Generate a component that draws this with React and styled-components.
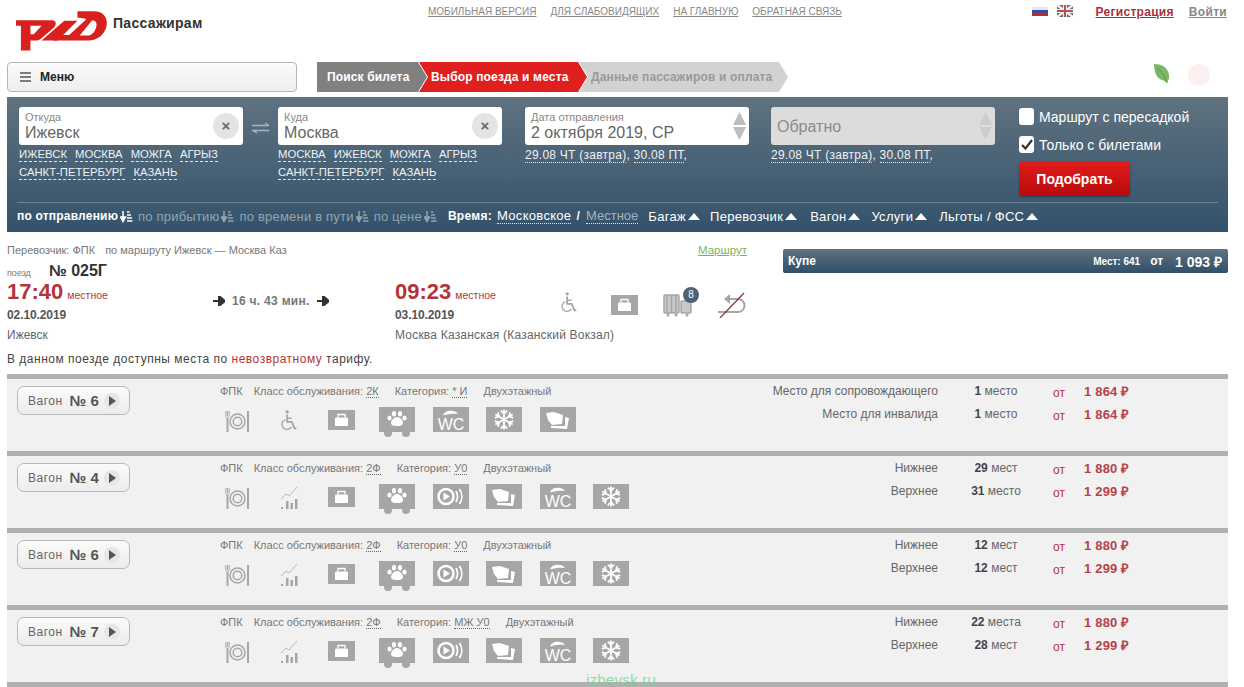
import React from 'react';
import styled, { createGlobalStyle } from 'styled-components';

const Global = createGlobalStyle`
  html, body { margin: 0; padding: 0; background: #fff; height: 687px; overflow: hidden; }
  body { font-family: "Liberation Sans", Arial, sans-serif; color: #444; }
  * { box-sizing: border-box; }
`;

const Page = styled.div`
  position: relative;
  width: 1244px;
  height: 687px;
  overflow: hidden;
`;

const Header = styled.header`
  display: grid;
  grid-template-columns: 428px 1fr auto;
  height: 62px;
  padding-right: 17px;
`;
const LogoBox = styled.div`
  display: flex;
  align-items: flex-start;
  padding: 10px 0 0 15px;
`;
const LogoText = styled.span`
  margin: 5px 0 0 6px;
  font-size: 14px;
  font-weight: bold;
  letter-spacing: 0.3px;
  color: #333;
`;
const TopNav = styled.nav`
  display: flex;
  gap: 14px;
  padding-top: 6px;
`;
const TopLink = styled.a`
  font-size: 10px;
  line-height: 12px;
  color: #888;
  text-decoration: underline;
  text-transform: uppercase;
`;
const UserBox = styled.div`
  display: flex;
  align-items: flex-start;
  padding-top: 5px;
`;
const Flag = styled.svg`
  width: 16px;
  height: 12px;
  margin-right: 9px;
`;
const UserLink = styled.a`
  margin-left: ${p => p.$ml}px;
  font-size: 12px;
  line-height: 14px;
  font-weight: bold;
  letter-spacing: 0.3px;
  text-decoration: underline;
  color: ${p => (p.$red ? '#a8323a' : '#888')};
`;

const ToolRow = styled.div`
  display: flex;
  height: 30px;
  padding-left: 7px;
  align-items: stretch;
`;
const MenuButton = styled.div`
  display: flex;
  align-items: center;
  width: 290px;
  padding-left: 12px;
  background: linear-gradient(#fbfbfb, #eee);
  border: 1px solid #b5b5b5;
  border-radius: 4px;
  font-size: 12px;
  font-weight: bold;
  color: #222;
`;
const Burger = styled.svg`
  width: 11px;
  height: 10px;
  margin-right: 9px;
`;
const Steps = styled.div`
  display: flex;
  margin-left: 20px;
`;
const Step = styled.div`
  display: flex;
  align-items: center;
  width: ${p => p.$w}px;
  margin-left: ${p => (p.$first ? 0 : -8)}px;
  padding-left: ${p => (p.$first ? 10 : 12)}px;
  font-size: 12px;
  font-weight: bold;
  letter-spacing: 0.15px;
  background: ${p => p.$bg};
  color: ${p => p.$color};
  clip-path: ${p => p.$first
    ? 'polygon(0 0, calc(100% - 9px) 0, 100% 50%, calc(100% - 9px) 100%, 0 100%)'
    : 'polygon(0 0, calc(100% - 9px) 0, 100% 50%, calc(100% - 9px) 100%, 0 100%, 9px 50%)'};
`;
const Eco = styled.div`
  display: flex;
  align-items: flex-start;
  margin-left: 365px;
  padding-top: 1px;
  gap: 17px;
`;
const Faint = styled.div`
  width: 22px;
  height: 22px;
  margin-top: 1px;
  border-radius: 50%;
  background: #fdf0f0;
`;

const Panel = styled.section`
  margin: 5px 16px 0 7px;
  height: 135px;
  padding: 10px 10px 0 12px;
  background: linear-gradient(#5f7280, #33526b);
  color: #fff;
`;
const Fields = styled.div`
  display: flex;
  height: 95px;
`;
const FieldCol = styled.div`
  width: ${p => p.$w || 224}px;
  margin-left: ${p => p.$ml || 0}px;
`;
const Input = styled.div`
  position: relative;
  height: 38px;
  padding: 4px 6px;
  border-radius: 3px;
  background: ${p => (p.$off ? '#dcdcdc' : '#fff')};
`;
const InputLabel = styled.div`
  font-size: 11px;
  line-height: 13px;
  color: #888;
`;
const InputValue = styled.div`
  font-size: 16px;
  line-height: 18px;
  color: #666;
`;
const OffValue = styled(InputValue)`
  padding-top: 7px;
  color: #8b8b8b;
`;
const Clear = styled.div`
  position: absolute;
  right: 4px;
  top: 6px;
  width: 26px;
  height: 26px;
  border-radius: 50%;
  background: #e4e4e4;
  color: #666;
  font-size: 15px;
  font-weight: bold;
  line-height: 26px;
  text-align: center;
`;
const Spin = styled.svg`
  position: absolute;
  right: 3px;
  top: 5px;
  width: 13px;
  height: 28px;
`;
const Swap = styled.svg`
  width: 18px;
  height: 12px;
  margin: 15px 8px 0 9px;
  flex: none;
`;
const Quick = styled.div`
  display: flex;
  flex-wrap: wrap;
  gap: 3px 8px;
  margin-top: 2px;
`;
const QuickLink = styled.a`
  font-size: 11.3px;
  line-height: 14px;
  color: #eef2f5;
  border-bottom: 1px dashed #dfe6ea;
`;
const Hints = styled.div`
  margin-top: 3px;
  font-size: 12px;
  line-height: 15px;
  letter-spacing: 0.25px;
  color: #eef2f5;
`;
const Hint = styled.a`
  border-bottom: 1px dotted #dfe6ea;
`;
const Checks = styled.div`
  margin-left: 24px;
  padding-top: 1px;
`;
const CheckRow = styled.label`
  display: flex;
  align-items: center;
  height: 17px;
  margin-bottom: 11px;
  font-size: 14px;
  color: #fff;
`;
const Box = styled.span`
  display: flex;
  align-items: center;
  justify-content: center;
  width: 15px;
  height: 17px;
  margin-right: 5px;
  background: #fff;
  border-radius: 3px;
`;
const Submit = styled.div`
  display: flex;
  align-items: center;
  justify-content: center;
  width: 111px;
  height: 35px;
  margin-top: -3px;
  background: linear-gradient(#e31b1b, #b80c0c);
  border-radius: 2px;
  box-shadow: 0 1px 2px rgba(0, 0, 0, 0.3);
  font-size: 14px;
  font-weight: bold;
`;
const Filters = styled.div`
  display: flex;
  align-items: center;
  height: 27px;
  border-top: 1px solid rgba(255, 255, 255, 0.25);
  margin: 0 0 0 -2px;
  font-size: 13px;
  white-space: nowrap;
`;
const Sort = styled.span`
  display: flex;
  align-items: center;
  margin-right: 5px;
  font-size: ${p => (p.$on ? 12 : 13)}px;
  letter-spacing: 0.2px;
  font-weight: ${p => (p.$on ? 'bold' : 'normal')};
  color: ${p => (p.$on ? '#fff' : '#93a4b1')};
`;
const SortIcon = styled.svg`
  width: 13px;
  height: 13px;
  margin-left: 2px;
`;
const TimeLabel = styled.span`
  margin-left: ${p => p.$ml}px;
  font-size: 12px;
  font-weight: bold;
  letter-spacing: 0.3px;
`;
const TimeLink = styled.a`
  margin-left: ${p => p.$ml}px;
  letter-spacing: ${p => (p.$dim ? 0 : 0.3)}px;
  color: ${p => (p.$dim ? '#a3b3be' : '#fff')};
  border-bottom: 1px dotted #dfe6ea;
`;
const Drop = styled.span`
  display: flex;
  align-items: center;
  margin-left: ${p => p.$ml}px;
  letter-spacing: 0.3px;
  &::after {
    content: '';
    margin-left: 2px;
    border: 6px solid transparent;
    border-top: 0;
    border-bottom: 7px solid #fff;
  }
`;

const Train = styled.section`
  display: grid;
  grid-template-columns: 776px 445px;
  height: 142px;
  padding-left: 7px;
`;
const TrainInfo = styled.div`
  padding-top: 11px;
`;
const Carrier = styled.div`
  display: flex;
  width: 740px;
  font-size: 11px;
  line-height: 14px;
  color: #777;
`;
const CarrierGap = styled.span`
  margin-left: 10px;
  flex: 1;
`;
const RouteLink = styled.a`
  font-size: 11.5px;
  color: #7ab55c;
  text-decoration: underline;
`;
const TrainNo = styled.div`
  display: flex;
  align-items: baseline;
  margin-top: 4px;
  height: 19px;
  font-size: 9px;
  line-height: 19px;
  color: #777;
`;
const NoValue = styled.b`
  margin-left: 18px;
  font-size: 16px;
  color: #333;
`;
const TimesRow = styled.div`
  display: grid;
  grid-template-columns: 206px 182px 150px auto;
  height: 71px;
`;
const TimeBig = styled.div`
  display: flex;
  align-items: baseline;
  height: 24px;
  font-size: 22px;
  line-height: 24px;
  font-weight: bold;
  color: #b5343a;
`;
const Local = styled.span`
  margin-left: 4px;
  font-size: 10.5px;
  font-weight: normal;
`;
const DateText = styled.div`
  margin-top: 4px;
  font-size: 12px;
  line-height: 14px;
  font-weight: bold;
  color: #555;
  letter-spacing: -0.1px;
`;
const Place = styled.div`
  margin-top: 6px;
  font-size: 12px;
  line-height: 14px;
  color: #666;
  white-space: nowrap;
  letter-spacing: ${p => (p.$wide ? 0.2 : 0)}px;
`;
const Duration = styled.div`
  display: flex;
  align-items: center;
  height: 20px;
  margin-top: 11px;
  gap: 7px;
  font-size: 12px;
  font-weight: bold;
  letter-spacing: 0.3px;
  color: #777;
`;
const Arrow = styled.svg`
  width: 12px;
  height: 10px;
`;
const Features = styled.div`
  display: flex;
  align-items: flex-start;
  padding-top: 12px;
  margin-left: 15px;
`;
const Notice = styled.div`
  font-size: 12px;
  line-height: 16px;
  letter-spacing: 0.5px;
  color: #444;
  white-space: nowrap;
`;
const NoticeRed = styled.span`
  color: #b5343a;
`;
const ClassBar = styled.div`
  display: flex;
  align-items: center;
  height: 24px;
  margin-top: 17px;
  padding: 0 6px 0 5px;
  background: linear-gradient(#5f7280, #2f4f69);
  border-radius: 2px;
  color: #fff;
  font-weight: bold;
  font-size: 12px;
`;
const ClassName = styled.span`
  flex: 1;
`;
const ClassSeats = styled.span`
  font-size: 10px;
`;
const ClassFrom = styled.span`
  margin: 0 12px 0 10px;
  font-size: 12px;
`;
const ClassPrice = styled.span`
  font-size: 14px;
`;

const Wagon = styled.article`
  display: grid;
  grid-template-columns: 213px 1fr 528px;
  height: 77px;
  margin: 0 16px 0 7px;
  padding-top: 5px;
  background: #f1f1f1;
  border-top: 5px solid #b0b0b0;
`;
const WagonEnd = styled.div`
  height: 5px;
  margin: 0 16px 0 7px;
  background: #b0b0b0;
`;
const WagonButton = styled.div`
  display: flex;
  align-items: center;
  width: 113px;
  height: 29px;
  margin: 2px 0 0 10px;
  padding-left: 10px;
  background: linear-gradient(#fbfbfb, #ececec);
  border: 1px solid #b8b8b8;
  border-radius: 7px;
  font-size: 12px;
  letter-spacing: 0.5px;
  color: #666;
`;
const WagonNo = styled.b`
  margin-left: 7px;
  font-size: 15px;
  letter-spacing: 0;
  color: #555;
`;
const Play = styled.span`
  display: flex;
  align-items: center;
  justify-content: center;
  width: 16px;
  height: 16px;
  margin-left: 5px;
  border-radius: 50%;
  background: #e6e6e6;
  &::after {
    content: '';
    margin-left: 2px;
    border: 5px solid transparent;
    border-right: 0;
    border-left: 7px solid #555;
  }
`;
const WagonInfo = styled.div``;
const Meta = styled.div`
  display: flex;
  gap: 16px;
  font-size: 11px;
  line-height: 14px;
  color: #777;
  white-space: nowrap;
`;
const MetaOwner = styled.span`
  margin-right: -5px;
`;
const Dots = styled.span`
  border-bottom: 1px dotted #666;
`;
const IconRow = styled.div`
  display: flex;
  align-items: flex-start;
  margin: 9px 0 0 5px;
`;
const Seats = styled.div`
  padding-top: 0;
`;
const SeatRow = styled.div`
  display: grid;
  grid-template-columns: 238px 115px 31px 1fr;
  height: 23px;
  font-size: 12px;
  line-height: 14px;
  color: #666;
`;
const SeatLabel = styled.span`
  text-align: right;
  white-space: nowrap;
`;
const SeatCount = styled.span`
  padding: 0 21px 0 22px;
  text-align: center;
  white-space: nowrap;
  b { color: #444; }
`;
const SeatFrom = styled.span`
  padding-top: 2px;
  color: #b5343a;
`;
const SeatPrice = styled.span`
  padding-top: 1px;
  font-size: 13px;
  font-weight: bold;
  letter-spacing: 0.2px;
  color: #b5434a;
`;
const Watermark = styled.div`
  position: absolute;
  left: 586px;
  top: 671px;
  font-size: 15.5px;
  line-height: 18px;
  color: #6fd68e;
  opacity: 0.75;
`;

const G = '#a6a6a6';

const IconSvg = styled.svg`
  display: block;
  flex: none;
  margin-right: ${p => p.$mr}px;
`;

const MealIcon = () => (
  <IconSvg $mr={30} width="25" height="24" viewBox="0 0 25 24" style={{ marginTop: 3 }}>
    <g fill="none" stroke={G}>
      <path d="M2.5 1v5M.8 1v4c0 2 1 3 1.7 3s1.7-1 1.7-3V1" strokeWidth="1" />
      <path d="M2.5 8v14" strokeWidth="2" />
      <circle cx="12.5" cy="11.5" r="7.5" strokeWidth="1.5" />
      <circle cx="12.5" cy="11.5" r="4.3" strokeWidth="1.5" />
      <path d="M23 1v21" strokeWidth="2" />
    </g>
  </IconSvg>
);

const WheelchairGlyph = ({ color = G, h = 21 }) => (
  <svg width="18" height={h} viewBox="0 0 18 23" style={{ display: 'block' }}>
    <g fill="none" stroke={color}>
      <circle cx="7" cy="2" r="1.8" fill={color} stroke="none" />
      <path d="M7 5v8h5l3 7h2" strokeWidth="2" />
      <path d="M7 9h5" strokeWidth="1.5" />
      <path d="M5 10.5a5.5 5.5 0 1 0 6.5 8" strokeWidth="1.5" />
    </g>
  </svg>
);

const WheelIcon = () => (
  <IconSvg as="div" $mr={30} style={{ marginTop: 3 }}>
    <WheelchairGlyph />
  </IconSvg>
);

const ChartIcon = () => (
  <IconSvg $mr={30} width="18" height="24" viewBox="0 0 18 24" style={{ marginTop: 2 }}>
    <path d="M1 13l5-5 3 2 8-9" fill="none" stroke="#b8b8b8" strokeWidth="1" />
    <path d="M1 21h2v2H1zM6 15h2.5v8H6zM10.5 17H13v6h-2.5zM15 13h2.5v10H15z" fill={G} />
  </IconSvg>
);

const BagIcon = ({ mr = 24 }) => (
  <IconSvg $mr={mr} width="27" height="20" viewBox="0 0 27 20" style={{ marginTop: 3 }}>
    <rect width="27" height="20" fill={G} />
    <path d="M7 9c0-1 .5-1.5 1.5-1.5h10c1 0 1.5.5 1.5 1.5v7H7z" fill="#fff" />
    <path d="M10 7.5V4.500h7v3" fill="none" stroke="#fff" strokeWidth="1.3" />
  </IconSvg>
);

const BoxIcon = ({ children, h = 25, mr = 17.5 }) => (
  <IconSvg $mr={mr} width="36" height={h} viewBox={`0 0 36 ${h}`}>
    <rect width="36" height="25" fill={G} />
    {children}
  </IconSvg>
);

const PetIcon = () => (
  <BoxIcon h={31}>
    <circle cx="9" cy="26" r="4" fill={G} />
    <circle cx="27" cy="26" r="4" fill={G} />
    <g fill="#fff">
      <ellipse cx="10.5" cy="11" rx="2.1" ry="2.5" />
      <ellipse cx="15" cy="6.8" rx="2.1" ry="2.7" />
      <ellipse cx="21" cy="6.8" rx="2.1" ry="2.7" />
      <ellipse cx="25.5" cy="11" rx="2.1" ry="2.5" />
      <path d="M18 10c3 0 6 3.5 6 6s-3 3-6 3-6-.5-6-3 3-6 6-6z" />
    </g>
  </BoxIcon>
);

const WcIcon = () => (
  <BoxIcon>
    <path d="M10 8.5c1-3.5 5-5.5 10-4.500 3 .5 4 1.500 5 3-5-.5-10 0-15 1.500z" fill="#fff" />
    <text x="18" y="23" textAnchor="middle" fontFamily="'Liberation Sans', sans-serif" fontSize="16" fill="#fff">WC</text>
  </BoxIcon>
);

const SnowIcon = () => (
  <BoxIcon>
    <g stroke="#fff" strokeWidth="1.8" fill="none" transform="translate(18 12.5)">
      {[0, 60, 120, 180, 240, 300].map(a => (
        <g key={a} transform={`rotate(${a})`}>
          <path d="M0 0V-10M-3.2-8.8L0-5.8l3.2-3" />
        </g>
      ))}
    </g>
  </BoxIcon>
);

const LinenIcon = () => (
  <BoxIcon>
    <path d="M6 6L14 5 23 8 22 17 12 18 8 13Z" fill="#fff" />
    <path d="M25 10L29 11 27 22 11 21V19H25Z" fill="#fff" />
  </BoxIcon>
);

const AudioIcon = () => (
  <BoxIcon>
    <circle cx="13" cy="12.5" r="7.5" fill="none" stroke="#fff" strokeWidth="2.5" />
    <path d="M10.5 8.5l6.500 4-6.500 4z" fill="#fff" />
    <g fill="none" stroke="#fff" strokeWidth="1.8">
      <path d="M23 7c2 3.500 2 7.500 0 11" />
      <path d="M26.5 5c3 4.500 3 10.500 0 15" />
    </g>
  </BoxIcon>
);

const ICONS = {
  meal: MealIcon,
  wheel: WheelIcon,
  chart: ChartIcon,
  bag: BagIcon,
  pet: PetIcon,
  wc: WcIcon,
  snow: SnowIcon,
  linen: LinenIcon,
  audio: AudioIcon,
};

const Logo = () => (
  <svg width="92" height="42" viewBox="15 15 280 126">
    <path
      fillRule="evenodd"
      fill="#d9201f"
      d="M18 45H128C142 45 142 60 132 69L92 103C88 106 84 107 78 107H62V137H33V62H18ZM62 62V88H72L96 62Z"
    />
    <path fill="#d9201f" d="M96 107L165 47H205L145 107Z" />
    <path
      fillRule="evenodd"
      fill="#d9201f"
      d="M205 18H255C285 18 299 38 293 65C287 90 265 107 238 107H130L145 90H180L232 42C226 40 215 38 205 38ZM250 45L212 92H236C250 92 260 78 263 62C265 52 260 46 250 45Z"
    />
  </svg>
);

const LuggageIcon = () => (
  <svg width="30" height="25" viewBox="0 0 30 25" style={{ display: 'block' }}>
    <g fill="#c8c8c8" stroke={G} strokeWidth="1.5">
      <rect x="1" y="3" width="15" height="18" rx="1" />
      <rect x="18" y="9" width="10" height="12" rx="1" />
    </g>
    <path d="M4 3v18M8.5 3v18M13 3v18" stroke={G} strokeWidth="1.5" />
    <circle cx="5" cy="23" r="1.5" fill={G} />
    <circle cx="13" cy="23" r="1.5" fill={G} />
    <circle cx="24" cy="23" r="1.5" fill={G} />
  </svg>
);

const Badge = styled.span`
  position: absolute;
  right: -6px;
  top: -5px;
  width: 16px;
  height: 16px;
  border-radius: 50%;
  background: #4c6275;
  color: #fff;
  font-size: 10px;
  line-height: 16px;
  text-align: center;
`;
const FeatureSlot = styled.div`
  position: relative;
  flex: none;
  margin-left: ${p => p.$ml}px;
`;

const UturnIcon = () => (
  <svg width="30" height="26" viewBox="0 0 30 26" style={{ display: 'block' }}>
    <path d="M1 20h20a6.5 6.5 0 0 0 0-13h-9" fill="none" stroke={G} strokeWidth="2" />
    <path d="M13 2L7 7l6 5z" fill={G} />
    <path d="M3 26L27 1" stroke="#8c3a3a" strokeWidth="1.3" />
  </svg>
);

const SortGlyph = ({ color }) => (
  <SortIcon viewBox="0 0 13 13">
    <path d="M3 1v8M0.5 7L3 11.5 5.5 7z" stroke={color} strokeWidth="1.5" fill={color} />
    <path d="M7 2h2.5M7 5h4M7 8h5M7 11h5.5" stroke={color} strokeWidth="1.5" />
  </SortIcon>
);

const WAGONS = [
  {
    no: 6, cls: '2К', cat: '* И',
    icons: ['meal', 'wheel', 'bag', 'pet', 'wc', 'snow', 'linen'],
    seats: [
      ['Место для сопровождающего', '1', 'место', '1 864'],
      ['Место для инвалида', '1', 'место', '1 864'],
    ],
  },
  {
    no: 4, cls: '2Ф', cat: 'У0',
    icons: ['meal', 'chart', 'bag', 'pet', 'audio', 'linen', 'wc', 'snow'],
    seats: [
      ['Нижнее', '29', 'мест', '1 880'],
      ['Верхнее', '31', 'место', '1 299'],
    ],
  },
  {
    no: 6, cls: '2Ф', cat: 'У0',
    icons: ['meal', 'chart', 'bag', 'pet', 'audio', 'linen', 'wc', 'snow'],
    seats: [
      ['Нижнее', '12', 'мест', '1 880'],
      ['Верхнее', '12', 'мест', '1 299'],
    ],
  },
  {
    no: 7, cls: '2Ф', cat: 'МЖ У0',
    icons: ['meal', 'chart', 'bag', 'pet', 'audio', 'linen', 'wc', 'snow'],
    seats: [
      ['Нижнее', '22', 'места', '1 880'],
      ['Верхнее', '28', 'мест', '1 299'],
    ],
  },
];

const CITIES_FROM = ['ИЖЕВСК', 'МОСКВА', 'МОЖГА', 'АГРЫЗ', 'САНКТ-ПЕТЕРБУРГ', 'КАЗАНЬ'];
const CITIES_TO = ['МОСКВА', 'ИЖЕВСК', 'МОЖГА', 'АГРЫЗ', 'САНКТ-ПЕТЕРБУРГ', 'КАЗАНЬ'];

const DateHints = () => (
  <Hints>
    <Hint>29.08 ЧТ (завтра)</Hint>, <Hint>30.08 ПТ</Hint>,
  </Hints>
);

const Spinner = ({ color }) => (
  <Spin viewBox="0 0 13 28">
    <path d="M6.5 0L13 13H0z" fill={color} />
    <path d="M0 15h13L6.5 28z" fill={color} />
  </Spin>
);

const App = () => (
  <Page>
    <Global />
    <Header>
      <LogoBox>
        <Logo />
        <LogoText>Пассажирам</LogoText>
      </LogoBox>
      <TopNav>
        <TopLink>Мобильная версия</TopLink>
        <TopLink>Для слабовидящих</TopLink>
        <TopLink>На главную</TopLink>
        <TopLink>Обратная связь</TopLink>
      </TopNav>
      <UserBox>
        <Flag viewBox="0 0 16 12">
          <rect y="2" width="16" height="3" fill="#e8e8ee" />
          <rect y="5" width="16" height="3" fill="#3b4a9c" />
          <rect y="8" width="16" height="3" fill="#c9262c" />
        </Flag>
        <Flag viewBox="0 0 16 12">
          <rect width="16" height="12" fill="#5a6a8c" />
          <path d="M0 0l16 12M16 0L0 12" stroke="#eee" strokeWidth="2.5" />
          <path d="M8 0v12M0 6h16" stroke="#eee" strokeWidth="4" />
          <path d="M8 0v12M0 6h16" stroke="#c04a50" strokeWidth="2" />
        </Flag>
        <UserLink $red $ml={13}>Регистрация</UserLink>
        <UserLink $ml={15}>Войти</UserLink>
      </UserBox>
    </Header>

    <ToolRow>
      <MenuButton>
        <Burger viewBox="0 0 11 10">
          <path d="M0 1h11M0 5h11M0 9h11" stroke="#555" strokeWidth="1.4" />
        </Burger>
        Меню
      </MenuButton>
      <Steps>
        <Step $first $w={110} $bg="#808080" $color="#fff">Поиск билета</Step>
        <Step $w={168} $bg="#e01f1f" $color="#fff">Выбор поезда и места</Step>
        <Step $w={209} $bg="#d2d2d2" $color="#999">Данные пассажиров и оплата</Step>
      </Steps>
      <Eco>
        <svg width="18" height="21" viewBox="0 0 18 21">
          <path d="M1 1c7 0 14 3 15 11 .5 4-1 6-2 8-1-1-2-2-5-3C3 15 1 8 1 1z" fill="#7db868" />
          <path d="M4 4c4 4 8 9 10 16" stroke="#5a9a4a" strokeWidth="1" fill="none" />
        </svg>
        <Faint />
      </Eco>
    </ToolRow>

    <Panel>
      <Fields>
        <FieldCol>
          <Input>
            <InputLabel>Откуда</InputLabel>
            <InputValue>Ижевск</InputValue>
            <Clear>×</Clear>
          </Input>
          <Quick>{CITIES_FROM.map(c => <QuickLink key={c}>{c}</QuickLink>)}</Quick>
        </FieldCol>
        <Swap viewBox="0 0 18 12">
          <path d="M0 3.5h17M0 8.5h17M13 1l4 2.5M5 11L1 8.5" stroke="#a9b6c0" strokeWidth="1.3" fill="none" />
        </Swap>
        <FieldCol>
          <Input>
            <InputLabel>Куда</InputLabel>
            <InputValue>Москва</InputValue>
            <Clear>×</Clear>
          </Input>
          <Quick>{CITIES_TO.map(c => <QuickLink key={c}>{c}</QuickLink>)}</Quick>
        </FieldCol>
        <FieldCol $ml={23}>
          <Input>
            <InputLabel>Дата отправления</InputLabel>
            <InputValue>2 октября 2019, СР</InputValue>
            <Spinner color="#bdbdbd" />
          </Input>
          <DateHints />
        </FieldCol>
        <FieldCol $ml={22}>
          <Input $off>
            <OffValue>Обратно</OffValue>
            <Spinner color="#cdcdcd" />
          </Input>
          <DateHints />
        </FieldCol>
        <Checks>
          <CheckRow><Box />Маршрут с пересадкой</CheckRow>
          <CheckRow>
            <Box>
              <svg width="12" height="11" viewBox="0 0 12 11">
                <path d="M1 6l3.5 3.5L11 1" fill="none" stroke="#333" strokeWidth="2.2" />
              </svg>
            </Box>
            Только с билетами
          </CheckRow>
          <Submit>Подобрать</Submit>
        </Checks>
      </Fields>
      <Filters>
        <Sort $on>по отправлению<SortGlyph color="#fff" /></Sort>
        <Sort>по прибытию<SortGlyph color="#93a4b1" /></Sort>
        <Sort>по времени в пути<SortGlyph color="#93a4b1" /></Sort>
        <Sort>по цене<SortGlyph color="#93a4b1" /></Sort>
        <TimeLabel $ml={6}>Время:</TimeLabel>
        <TimeLink $ml={5}>Московское</TimeLink>
        <TimeLabel $ml={5}>/</TimeLabel>
        <TimeLink $dim $ml={6}>Местное</TimeLink>
        <Drop $ml={10}>Багаж</Drop>
        <Drop $ml={10}>Перевозчик</Drop>
        <Drop $ml={13}>Вагон</Drop>
        <Drop $ml={11}>Услуги</Drop>
        <Drop $ml={12}>Льготы / ФСС</Drop>
      </Filters>
    </Panel>

    <Train>
      <TrainInfo>
        <Carrier>
          Перевозчик: ФПК
          <CarrierGap>по маршруту Ижевск — Москва Каз</CarrierGap>
          <RouteLink>Маршрут</RouteLink>
        </Carrier>
        <TrainNo>поезд<NoValue>№ 025Г</NoValue></TrainNo>
        <TimesRow>
          <div>
            <TimeBig>17:40<Local>местное</Local></TimeBig>
            <DateText>02.10.2019</DateText>
            <Place>Ижевск</Place>
          </div>
          <Duration>
            <Arrow viewBox="0 0 12 10"><path d="M0 5h7M6 0l6 5-6 5z" stroke="#333" strokeWidth="2" fill="#333" /></Arrow>
            16 ч. 43 мин.
            <Arrow viewBox="0 0 12 10"><path d="M0 5h7M6 0l6 5-6 5z" stroke="#333" strokeWidth="2" fill="#333" /></Arrow>
          </Duration>
          <div>
            <TimeBig>09:23<Local>местное</Local></TimeBig>
            <DateText>03.10.2019</DateText>
            <Place $wide>Москва Казанская (Казанский Вокзал)</Place>
          </div>
          <Features>
            <FeatureSlot $ml={0}><WheelchairGlyph /></FeatureSlot>
            <FeatureSlot $ml={33}><BagIcon mr={0} /></FeatureSlot>
            <FeatureSlot $ml={25}>
              <LuggageIcon />
              <Badge>8</Badge>
            </FeatureSlot>
            <FeatureSlot $ml={24}><UturnIcon /></FeatureSlot>
          </Features>
        </TimesRow>
        <Notice>
          В данном поезде доступны места по <NoticeRed>невозвратному</NoticeRed> тарифу.
        </Notice>
      </TrainInfo>
      <ClassBar>
        <ClassName>Купе</ClassName>
        <ClassSeats>Мест: 641</ClassSeats>
        <ClassFrom>от</ClassFrom>
        <ClassPrice>1 093 ₽</ClassPrice>
      </ClassBar>
    </Train>

    {WAGONS.map((w, i) => (
      <Wagon key={i}>
        <div>
          <WagonButton>
            Вагон<WagonNo>№ {w.no}</WagonNo><Play />
          </WagonButton>
        </div>
        <WagonInfo>
          <Meta>
            <MetaOwner>ФПК</MetaOwner>
            <span>Класс обслуживания: <Dots>{w.cls}</Dots></span>
            <span>Категория: <Dots>{w.cat}</Dots></span>
            <span>Двухэтажный</span>
          </Meta>
          <IconRow>
            {w.icons.map((name, k) => {
              const Icon = ICONS[name];
              return <Icon key={k} />;
            })}
          </IconRow>
        </WagonInfo>
        <Seats>
          {w.seats.map(s => (
            <SeatRow key={s[0]}>
              <SeatLabel>{s[0]}</SeatLabel>
              <SeatCount><b>{s[1]}</b> {s[2]}</SeatCount>
              <SeatFrom>от</SeatFrom>
              <SeatPrice>{s[3]} ₽</SeatPrice>
            </SeatRow>
          ))}
        </Seats>
      </Wagon>
    ))}
    <WagonEnd />
    <Watermark>izhevsk.ru</Watermark>
  </Page>
);

export default App;
